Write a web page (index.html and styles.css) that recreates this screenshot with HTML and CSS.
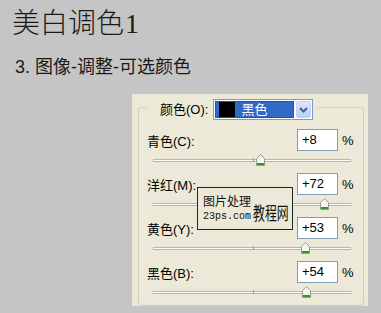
FILE: index.html
```html
<!DOCTYPE html>
<html lang="zh-CN">
  <head>
    <meta charset="UTF-8" />
    <title>美白调色1</title>
    <link rel="stylesheet" href="styles.css">
  </head>
  <body>
    <h1 class="title">美白调色<span class="num">1</span></h1>
    <p class="step">3. 图像-调整-可选颜色</p>

    <div class="panel">
      <fieldset class="group">
        <legend class="head">
          <span class="label">颜色(<u>O</u>):</span>
          <span class="select">
            <span class="chosen"><i class="swatch"></i>黑色</span>
            <span class="arrow">
              <svg width="9" height="6" viewBox="0 0 9 6"><path d="M1 1 L4.5 4.5 L8 1" fill="none" stroke="#4d6185" stroke-width="2"/></svg>
            </span>
          </span>
        </legend>

        <div class="row">
          <div class="line">
            <span class="name">青色(<u>C</u>):</span>
            <span class="field">+8</span>
            <span class="pct">%</span>
          </div>
          <div class="slider">
            <div class="track"></div>
            <svg class="thumb" style="left: 103.5px" width="9" height="12" viewBox="0 0 9 12"><path d="M0.5 11.5 V4.5 L4.5 0.5 L8.5 4.5 V11.5 Z" fill="#f6f6f1" stroke="#9c9b91"/><rect x="1" y="9" width="7" height="2" fill="#21a221"/></svg>
          </div>
        </div>

        <div class="row">
          <div class="line">
            <span class="name">洋红(<u>M</u>):</span>
            <span class="field">+72</span>
            <span class="pct">%</span>
          </div>
          <div class="slider">
            <div class="track"></div>
            <svg class="thumb" style="left: 167.5px" width="9" height="12" viewBox="0 0 9 12"><path d="M0.5 11.5 V4.5 L4.5 0.5 L8.5 4.5 V11.5 Z" fill="#f6f6f1" stroke="#9c9b91"/><rect x="1" y="9" width="7" height="2" fill="#21a221"/></svg>
          </div>
        </div>

        <div class="row">
          <div class="line">
            <span class="name">黄色(<u>Y</u>):</span>
            <span class="field">+53</span>
            <span class="pct">%</span>
          </div>
          <div class="slider">
            <div class="track"></div>
            <svg class="thumb" style="left: 148.5px" width="9" height="12" viewBox="0 0 9 12"><path d="M0.5 11.5 V4.5 L4.5 0.5 L8.5 4.5 V11.5 Z" fill="#f6f6f1" stroke="#9c9b91"/><rect x="1" y="9" width="7" height="2" fill="#21a221"/></svg>
          </div>
        </div>

        <div class="row">
          <div class="line">
            <span class="name">黑色(<u>B</u>):</span>
            <span class="field">+54</span>
            <span class="pct">%</span>
          </div>
          <div class="slider">
            <div class="track"></div>
            <svg class="thumb" style="left: 149.5px" width="9" height="12" viewBox="0 0 9 12"><path d="M0.5 11.5 V4.5 L4.5 0.5 L8.5 4.5 V11.5 Z" fill="#f6f6f1" stroke="#9c9b91"/><rect x="1" y="9" width="7" height="2" fill="#21a221"/></svg>
          </div>
        </div>
      </fieldset>

      <div class="mark">
        <div class="mark-top">图片处理</div>
        <div class="mark-bottom">
          <span class="site">23ps.com</span>
          <span class="big">教程网</span>
        </div>
      </div>
    </div>
  </body>
</html>
```

FILE: styles.css
```css
* {
  margin: 0;
  padding: 0;
  box-sizing: border-box;
}
body {
  background-color: #c5c5c5;
  font-family: "Liberation Sans", "Noto Sans CJK SC", sans-serif;
  color: #111;
}
u {
  text-decoration: none;
}
.title {
  margin: 7px 0 0 12px;
  font-size: 28px;
  line-height: 28px;
  font-weight: 300;
  font-family: "Noto Sans CJK SC", sans-serif;
  color: #1a1a1a;
}
.title .num {
  font-family: "Liberation Serif", serif;
  font-weight: normal;
  margin-left: 1px;
}
.step {
  margin: 20px 0 0 15px;
  font-size: 18px;
  line-height: 18px;
  color: #1a1a1a;
}
.panel {
  position: relative;
  margin: 18px 0 0 132px;
  width: 236px;
  height: 212px;
  padding: 5px 4px 4px 6px;
  background-color: #ece9d8;
  display: flex;
  flex-direction: column;
  font-size: 13px;
  color: #000;
}
.group {
  flex: 1;
  border: 1px solid #d0d0bf;
  border-radius: 3px;
  padding: 13px 0 0 8px;
  min-width: 0;
}
.group .head {
  height: 17px;
  padding: 0 5px 0 13px;
  display: flex;
  align-items: flex-start;
}
.head .label {
  line-height: 21px;
  margin-right: 5px;
}
.select {
  display: flex;
  width: 100px;
  height: 21px;
  border: 1px solid #7f9db9;
  background-color: #fff;
  padding: 1px;
}
.chosen {
  flex: 1;
  display: flex;
  align-items: center;
  background-color: #316ac5;
  color: #fff;
  outline: 1px dotted #1b3c7a;
  outline-offset: -1px;
  padding-left: 4px;
  margin-right: 2px;
  line-height: 17px;
}
.swatch {
  display: block;
  width: 16px;
  height: 15px;
  background-color: #000;
  margin-right: 6px;
}
.arrow {
  width: 15px;
  display: flex;
  align-items: center;
  justify-content: center;
  background: linear-gradient(#dbe6fd, #b9cdf7);
  border: 1px solid #c3d3fd;
  border-radius: 2px;
}
.row {
  height: 44px;
}
.line {
  display: flex;
  align-items: center;
  height: 22px;
}
.name {
  width: 150px;
}
.field {
  width: 41px;
  height: 22px;
  border: 1px solid #7f9db9;
  background-color: #fff;
  padding-left: 4px;
  line-height: 20px;
}
.pct {
  margin-left: 4px;
}
.slider {
  position: relative;
  margin-left: 5px;
  width: 200px;
  height: 22px;
}
.track {
  position: relative;
  top: 8px;
  height: 3px;
  border: 1px solid #b7b6ac;
  border-radius: 2px;
  background-color: #fbfbf8;
}
.track::after {
  content: "";
  position: absolute;
  left: 100px;
  top: -2px;
  width: 1px;
  height: 4px;
  background-color: #a0a090;
}
.thumb {
  position: absolute;
  top: 3px;
  display: block;
}
.mark {
  position: absolute;
  left: 65px;
  top: 93px;
  width: 96px;
  height: 43px;
  border: 1px solid #222;
  background-color: #ece9d8;
  padding: 6px 0 0 5px;
  font-family: "Noto Sans CJK SC", sans-serif;
  color: #111;
  white-space: nowrap;
}
.mark-top {
  font-size: 12px;
  line-height: 13px;
}
.mark-bottom {
  display: flex;
  align-items: flex-end;
  margin-top: -4px;
}
.site {
  font-family: "Liberation Mono", monospace;
  font-size: 10px;
  line-height: 12px;
  flex-shrink: 0;
}
.big {
  flex-shrink: 0;
  font-size: 18px;
  line-height: 18px;
  margin-left: 2px;
  margin-bottom: 2px;
  transform: scaleX(0.66);
  transform-origin: left;
}
```
